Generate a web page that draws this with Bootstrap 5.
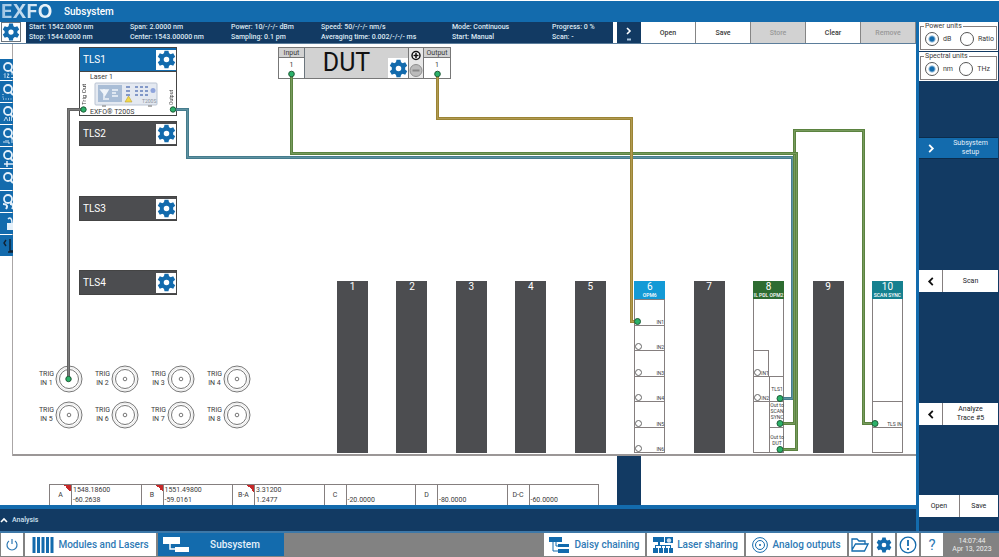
<!DOCTYPE html>
<html lang="en">
<head>
<meta charset="utf-8">
<meta name="viewport" content="width=device-width, initial-scale=1">
<title>Subsystem</title>
<link href="https://cdn.jsdelivr.net/npm/bootstrap@5.3.0/dist/css/bootstrap.min.css" rel="stylesheet">
<style>
:root{--blue:#136bad;--navy:#123a63;--slate:#4c4d50;--ink:#3a3a3a;--line:#857f7f}
body{font:500 7px/10px Roboto,"Liberation Sans",sans-serif;color:var(--ink);background:#fff;padding-top:1px}
button,a.tool{font:inherit;color:inherit;border:0;padding:0;background:#fff;text-decoration:none}
svg{display:block;flex:none}
.topbar{background:var(--blue);height:21px;padding-left:1px;color:#fff}
.logo{font:700 19px/21px Inter,sans-serif;width:63px;color:transparent;background:linear-gradient(90deg,#9cc4e4,#dcebf6 55%,#fff);-webkit-background-clip:text;background-clip:text}
.page-title{font-size:10px;line-height:22px;font-weight:500;margin:0}
.navy{background:var(--navy);color:#fff}
.inforow{height:22px;border-bottom:1px solid #5b7d9b}
.gearbtn{width:20px;height:20px;margin:0 5px 0 1px;color:var(--blue)}
.gearbtn svg{width:18px;height:18px}
.status{display:grid;grid-template-columns:101fr 101fr 90fr 131fr 100fr 61fr;padding-left:3px;margin-right:4px;color:#dce8f3;white-space:nowrap}
.expand{width:24px}
.cmd{width:55px;border-right:1px solid #858585}
.cmd:disabled{background:#d2d2d2;color:#999}
.stage{min-height:412px}
.rail{width:13px;padding-top:15px;box-shadow:inset -1px 0 #aaa6a6}
.rail button{width:13px;height:21px;margin-bottom:1px;background:var(--blue);color:#e4f0fa;overflow:hidden;display:block}
.canvas{border-bottom:2px solid #9b9797;position:relative}
.node{position:absolute}
.wires{position:absolute;left:0;top:0;width:100%;height:100%;overflow:hidden;pointer-events:none}
.tls{width:98px;left:66px;border:1px solid #444}
.tls header{height:23px;background:var(--slate);color:#fff;padding-left:3px;font-size:10px;font-weight:400}
.tls.on header{background:var(--blue)}
.tls header button,.dut .gearbox{width:20px;height:20px;color:var(--blue)}
.tls header svg,.dut .gearbox svg{width:19px;height:19px}
.laser{height:44px;font-weight:400;border-top:1px solid #444}
.laser .side{writing-mode:vertical-rl;transform:rotate(180deg);font-size:6px;line-height:7px;width:8px;padding-top:10px;white-space:nowrap}
.laser .side.outp{font-size:5px}
.laser .face{padding-left:2px;white-space:nowrap}
.laser svg{width:68px;height:25px}
.dut{left:265px;top:3px;width:173px;height:32px;border:1px solid #777;background:#d2d2d2}
.dut .port{width:26px;background:#fff;font-weight:400;text-align:center}
.dut .port b{display:block;font-weight:400;background:#d2d2d2;height:10px;border-bottom:1px solid #777}
.dut .port i{display:block;font-style:normal;line-height:14px}
.dut strong{font-weight:400;font-size:25px;line-height:30px;color:#111}
.dut .pm{width:16px;background:#e8e8e8;border-left:1px solid #777;border-right:1px solid #777}
.dut .pm button{background:transparent;height:15px}
.slots{left:324px;top:237px;width:566px;height:172px}
.slot{width:31px;background:var(--slate);color:#fff;text-align:center;font-size:10px;line-height:12px;font-weight:400}
.slot.live{background:#fff;color:var(--ink);border:1px solid var(--line);display:flex;flex-direction:column}
.slot header{height:18px;margin:-1px -1px 0;color:#fff;overflow:hidden;white-space:nowrap}
.slot header small{display:block;font-size:5px;line-height:5px;margin:0 -4px;font-weight:500}
.cells{display:grid;flex:1;grid-template-rows:repeat(6,minmax(0,1fr));font-size:5px;line-height:6px;font-weight:400}
.duo{grid-template-columns:15px 15px}
.cell{border-top:1px solid var(--line);display:flex;align-items:flex-end;justify-content:space-between}
.cell::before{content:"";width:7px;height:7px;border:1px solid #666;border-radius:50%;background:#fff;flex:none}
.cell.used::before{visibility:hidden}
.cell.out{border-left:1px solid var(--line);align-items:center;justify-content:center}
.cell.raised{align-items:flex-start}
.cell.out::before{content:none}
.cell.rside{border-right:1px solid var(--line)}
.trigs{left:25px;top:321px;display:grid;grid-template-columns:repeat(4,56px);row-gap:8px;line-height:9px;font-weight:400;text-align:center}
.trigs span{width:17px;white-space:nowrap;flex:none}
.trigs svg{width:28px;height:28px}
.bottom{height:49px}
.markers{width:550px;margin-left:49px;table-layout:fixed;font-weight:400;border-collapse:collapse}
.markers th,.markers td{border:1px solid var(--line);border-bottom:0;padding:0;height:21px}
.markers th{width:22px;text-align:center;font-weight:400}
.markers td{padding-left:1px;vertical-align:bottom}
.flagged{background:linear-gradient(45deg,transparent 50%,#c62828 50%) top right/7px 7px no-repeat}
.gapcol{width:24px}
.rightpad{width:275px}
.analysis{height:26px;border-top:4px solid var(--blue)}
.analysis button{background:none;color:#cfe0ef}
.sidebar{width:83px;border-left:3px solid var(--blue);padding-right:1px}
.units{background:#fff;color:var(--ink);padding:2px 1px 1px;margin-bottom:1px;font-weight:400}
.units fieldset{border:1px solid var(--line);height:24px;min-width:0;position:relative;margin-top:2px;padding:5px 2px 0 4px}
.units legend{position:absolute;top:-5px;left:3px;width:auto;font-size:7px;line-height:9px;background:#fff;margin:0;padding:0 1px}
.units label{line-height:15px}
.units input{appearance:none;width:14px;height:14px;border:1px solid #555;border-radius:50%;margin:0;background:#fff;flex:none}
.units input:checked{background:radial-gradient(circle,var(--blue) 2px,#fff 4px)}
.side-btn{height:22px;width:100%;line-height:9px;font-weight:400}
.side-btn .chev{width:24px;align-self:stretch;border-right:1px solid var(--line);color:#111}
.side-btn.active{background:var(--blue);color:#e4f0fa;border:1px solid #0b2c4d;border-width:1px 0}
.side-btn.active .chev{border-color:transparent;color:#fff}
.s1{margin-top:55px}.s2,.s3{margin-top:111px}
.s4{margin-bottom:14px;height:22px}
.s4 button{font-weight:400}
.s4 button+button{border-left:1px solid var(--line)}
.taskbar{background:#828282;height:26px;border-top:2px solid #3d78a8;padding-left:1px;gap:2px}
.taskbar .tool{font-size:10px;color:#2f7ab5;height:23px;display:flex;align-items:center;justify-content:center;white-space:nowrap}
.taskbar .wide{min-width:131px}
.taskbar .mid{min-width:101px}
.taskbar .slim{min-width:97px}
.taskbar .sq{width:22px}
.taskbar .help{font-size:15px;font-weight:400}
.taskbar .tool.current{background:var(--blue);color:#e4f0fa;width:126px}
.clock{width:54px;color:#eee;text-align:center;line-height:8px;font-weight:400}
</style>
</head>
<body class="d-flex flex-column min-vh-100">
<svg width="0" height="0" class="position-absolute" aria-hidden="true">
  <symbol id="gear" viewBox="-12 -12 24 24">
    <circle r="6" fill="none" stroke="currentColor" stroke-width="5"/>
    <g fill="currentColor"><path id="tooth" d="M-3.4-7 L-2.5-11.2H2.5L3.4-7Z"/><use href="#tooth" transform="rotate(60)"/><use href="#tooth" transform="rotate(120)"/><use href="#tooth" transform="rotate(180)"/><use href="#tooth" transform="rotate(240)"/><use href="#tooth" transform="rotate(300)"/></g>
  </symbol>
  <symbol id="left" viewBox="0 0 8 10"><path d="M6 1 2 5l4 4" fill="none" stroke="currentColor" stroke-width="2"/></symbol>
  <symbol id="right" viewBox="0 0 8 10"><path d="M2 1l4 4-4 4" fill="none" stroke="currentColor" stroke-width="2"/></symbol>
  <symbol id="lens" viewBox="0 0 13 21"><circle cx="8" cy="8" r="4" fill="none" stroke="currentColor" stroke-width="1.800"/><path d="M10.500 11 13 14" stroke="currentColor" stroke-width="2"/></symbol>
  <symbol id="jack" viewBox="-14 -14 28 28"><g fill="none" stroke="#777"><circle r="13"/><circle r="11.500" stroke="#ddd" stroke-width=".7"/><circle r="9.500"/><circle r="1.800"/></g></symbol>
</svg>

<header class="topbar d-flex">
  <span class="logo">EXFO</span>
  <h1 class="page-title">Subsystem</h1>
</header>

<div class="d-flex flex-grow-1">
  <main class="d-flex flex-column flex-grow-1">
    <div class="inforow d-flex">
      <button class="gearbtn border border-secondary d-flex align-items-center justify-content-center" aria-label="Settings"><svg><use href="#gear"/></svg></button>
      <div class="status navy flex-grow-1">
        <div>Start: 1542.0000 nm<br>Stop: 1544.0000 nm</div>
        <div>Span: 2.0000 nm<br>Center: 1543.00000 nm</div>
        <div>Power: 10/-/-/- dBm<br>Sampling: 0.1 pm</div>
        <div>Speed: 50/-/-/- nm/s<br>Averaging time: 0.002/-/-/- ms</div>
        <div>Mode: Continuous<br>Start: Manual</div>
        <div>Progress: 0 %<br>Scan: -</div>
      </div>
      <button class="expand navy d-flex align-items-center justify-content-center" aria-label="Expand"><svg width="8" height="16" viewBox="0 0 8 16"><path d="M2 3l3 3-3 3" fill="none" stroke="#fff" stroke-width="1.600"/><path d="M2 14.500h4" stroke="#a9c4dd" stroke-width="2"/></svg></button>
      <button class="cmd">Open</button><button class="cmd">Save</button><button class="cmd" disabled>Store</button><button class="cmd">Clear</button><button class="cmd" disabled>Remove</button>
    </div>

    <div class="stage d-flex flex-grow-1">
      <nav class="rail" aria-label="Zoom tools">
        <button aria-label="Zoom 1:1"><svg width="13" height="21"><use href="#lens"/><path d="M4 15.500l1-1V19M7 15h2l-2 3.500h2.500M11 15h2M11 18.500h2" fill="none" stroke="currentColor" stroke-width=".8"/></svg></button>
        <button aria-label="Zoom area"><svg width="13" height="21"><use href="#lens"/><path d="M3 13v5h10" fill="none" stroke="currentColor" stroke-dasharray="1 1.500"/></svg></button>
        <button aria-label="Zoom all"><svg width="13" height="21"><use href="#lens"/><path d="M4 18l2-4 2 4M9.500 14v4M11.500 14v4" fill="none" stroke="currentColor" stroke-width=".8"/></svg></button>
        <button aria-label="Zoom auto"><svg width="13" height="21"><use href="#lens"/><path d="M4 18v-2M6 18v-3M8 15v3h2M12 14v4" fill="none" stroke="currentColor" stroke-width=".9"/></svg></button>
        <button aria-label="Zoom vertical"><svg width="13" height="21"><use href="#lens"/><path d="M4 17h9M7 14v6" fill="none" stroke="currentColor" stroke-width="1.500"/></svg></button>
        <button aria-label="Zoom"><svg width="13" height="21"><use href="#lens"/></svg></button>
        <button aria-label="Undo zoom"><svg width="13" height="21"><use href="#lens"/><path d="M3 13c4 0 5 2 3 5M10 13c3 0 4 2 2 5" fill="none" stroke="currentColor" stroke-width="2"/></svg></button>
        <button aria-label="Lock"><svg width="13" height="21"><path d="M7 10h6v7H7z" fill="currentColor"/><path d="M8 6c2-2 4-1 4 4" fill="none" stroke="currentColor" stroke-width="1.500"/></svg></button>
        <button aria-label="Collapse"><svg width="13" height="21"><path d="M6 5 4 8l2 3M10 4v12h3M8 17h5" fill="none" stroke="#123" stroke-width="1.400"/></svg></button>
      </nav>

      <section class="canvas flex-grow-1" aria-label="Wiring diagram">
        <article class="node tls on" style="top:3px">
          <header class="d-flex align-items-center justify-content-between">TLS1<button class="d-flex align-items-center justify-content-center" aria-label="TLS1 settings"><svg><use href="#gear"/></svg></button></header>
          <div class="laser d-flex justify-content-between bg-white">
            <span class="side">Trig Out</span>
            <div class="face flex-grow-1">Laser 1
              <svg viewBox="0 0 68 25" aria-hidden="true"><rect x="5" y="1" width="62" height="22" rx="1" fill="#e4e9f1" stroke="#b9c3d2"/><rect x="8" y="3" width="24" height="17" fill="#a9bdd6"/><path d="M14 7v9M11 8h7l-3 5zM13 17h6M22 8h6M22 11h4M22 14h6" stroke="#f1f5fa" stroke-width="1.500" fill="#f1f5fa"/><g stroke="#8399c8" stroke-width="1.800"><path d="M36 5h4M36 9h4M36 13h4" /><path d="M45 5h14M45 9h14M45 13h14" stroke-dasharray="3 2"/></g><circle cx="63" cy="8.500" r="2.500" fill="#8ea4dc"/><path d="M35 20l3.500-6 3.500 6z" fill="#f3d949" stroke="#b8a23c" stroke-width=".6"/><path d="M12 24h4M58 24h4" stroke="#999" stroke-width="1.500"/><text x="52" y="20.500" font-size="5" fill="#8b919c">T200S</text></svg>
              EXFO® T200S</div>
            <span class="side outp">Output</span>
          </div>
        </article>
        <article class="node tls" style="top:77px"><header class="d-flex align-items-center justify-content-between">TLS2<button class="d-flex align-items-center justify-content-center" aria-label="TLS2 settings"><svg><use href="#gear"/></svg></button></header></article>
        <article class="node tls" style="top:152px"><header class="d-flex align-items-center justify-content-between">TLS3<button class="d-flex align-items-center justify-content-center" aria-label="TLS3 settings"><svg><use href="#gear"/></svg></button></header></article>
        <article class="node tls" style="top:226px"><header class="d-flex align-items-center justify-content-between">TLS4<button class="d-flex align-items-center justify-content-center" aria-label="TLS4 settings"><svg><use href="#gear"/></svg></button></header></article>

        <article class="node dut d-flex">
          <div class="port border-end border-secondary"><b>Input</b><i>1</i></div>
          <strong class="flex-grow-1 text-center">DUT</strong>
          <button class="gearbox d-flex align-items-center justify-content-center align-self-end" aria-label="DUT settings"><svg><use href="#gear"/></svg></button>
          <div class="pm d-flex flex-column align-items-center">
            <button aria-label="Add"><svg width="12" height="15" viewBox="0 0 12 15"><circle cx="6" cy="7.500" r="4" fill="#fff" stroke="#111" stroke-width="1.500"/><path d="M6 5v5M3.500 7.500h5" stroke="#111" stroke-width="1.500"/></svg></button>
            <button aria-label="Remove output"><svg width="14" height="15" viewBox="0 0 14 15"><circle cx="7" cy="7.500" r="6" fill="#bbb" stroke="#8f8f8f"/><path d="M3.500 7.500h7" stroke="#888" stroke-width="2"/></svg></button>
          </div>
          <div class="port"><b>Output</b><i>1</i></div>
        </article>

        <div class="node slots d-flex justify-content-between">
          <div class="slot">1</div><div class="slot">2</div><div class="slot">3</div><div class="slot">4</div><div class="slot">5</div>
          <div class="slot live"><header style="background:#139ad6">6<small>OPM6</small></header>
            <div class="cells"><div class="cell used">IN1</div><div class="cell">IN2</div><div class="cell">IN3</div><div class="cell">IN4</div><div class="cell">IN5</div><div class="cell">IN6</div></div></div>
          <div class="slot">7</div>
          <div class="slot live"><header style="background:#2e6c31">8<small>IL PDL OPM2</small></header>
            <div class="cells duo">
              <div class="cell rside" style="grid-area:3/1">IN1</div><div class="cell" style="grid-area:4/1">IN2</div>
              <div class="cell out" style="grid-area:5/1;border-left:0"></div>
              <div class="cell out" style="grid-area:4/2">TLS1</div>
              <div class="cell out raised" style="grid-area:5/2">Out to SCAN SYNC</div>
              <div class="cell out" style="grid-area:6/2">Out to DUT</div>
            </div></div>
          <div class="slot">9</div>
          <div class="slot live"><header style="background:#16808f">10<small>SCAN SYNC</small></header>
            <div class="cells"><div class="cell used" style="grid-row:5">TLS IN</div><div class="cell out" style="grid-row:6;border-left:0"></div></div></div>
        </div>

        <div class="node trigs">
          <div class="d-flex align-items-center"><span>TRIG<br>IN 1</span><svg><use href="#jack"/></svg></div>
          <div class="d-flex align-items-center"><span>TRIG<br>IN 2</span><svg><use href="#jack"/></svg></div>
          <div class="d-flex align-items-center"><span>TRIG<br>IN 3</span><svg><use href="#jack"/></svg></div>
          <div class="d-flex align-items-center"><span>TRIG<br>IN 4</span><svg><use href="#jack"/></svg></div>
          <div class="d-flex align-items-center"><span>TRIG<br>IN 5</span><svg><use href="#jack"/></svg></div>
          <div class="d-flex align-items-center"><span>TRIG<br>IN 6</span><svg><use href="#jack"/></svg></div>
          <div class="d-flex align-items-center"><span>TRIG<br>IN 7</span><svg><use href="#jack"/></svg></div>
          <div class="d-flex align-items-center"><span>TRIG<br>IN 8</span><svg><use href="#jack"/></svg></div>
        </div>

        <svg class="wires" aria-hidden="true">
          <g transform="translate(-13 -44)" fill="none">
            <g stroke-width="3">
              <path d="M84 109.500H68.500V379" stroke="#636363"/><path d="M84 109.500H68.500V379" stroke="#7d7d7d" stroke-width="1"/>
              <path d="M173 109.500H187.500V157.500H792.500V398.500H780" stroke="#457c8d"/><path d="M173 109.500H187.500V157.500H792.500V398.500H780" stroke="#5f93a2" stroke-width="1"/>
              <path d="M780 423.500H794.500V130.500H863.500V423.500H875" stroke="#5b8340"/><path d="M780 423.500H794.500V130.500H863.500V423.500H875" stroke="#779a5d" stroke-width="1"/>
              <path d="M291.500 74V153.500H796.500V449.500H780" stroke="#5b8340"/><path d="M291.500 74V153.500H796.500V449.500H780" stroke="#779a5d" stroke-width="1"/>
              <path d="M437.500 74V118.500H631.500V321.500H637" stroke="#9b8435"/><path d="M437.500 74V118.500H631.500V321.500H637" stroke="#b19a50" stroke-width="1"/>
            </g>
            <g fill="#2bb169" stroke="#1f5c38">
              <circle cx="83.500" cy="109.500" r="2.700"/><circle cx="173" cy="109.500" r="2.700"/><circle cx="68.500" cy="379" r="2.700"/>
              <circle cx="291.500" cy="74" r="2.800"/><circle cx="437.500" cy="74" r="2.800"/><circle cx="637.500" cy="321.500" r="3"/>
              <circle cx="780" cy="398.500" r="3"/><circle cx="780" cy="423.500" r="3"/><circle cx="780" cy="449.500" r="3"/><circle cx="875" cy="423.500" r="3"/>
            </g>
          </g>
        </svg>
      </section>
    </div>

    <div class="bottom d-flex align-items-stretch">
      <div class="flex-grow-1 d-flex align-items-end">
        <table class="markers">
          <tr><th scope="row" class="flagged">A</th><td>1548.18600<br>-60.2638</td><th scope="row" class="flagged">B</th><td>1551.49800<br>-59.0161</td><th scope="row" class="flagged">B-A</th><td>3.31200<br>1.2477</td><th scope="row">C</th><td>-20.0000</td><th scope="row">D</th><td>-80.0000</td><th scope="row">D-C</th><td>-60.0000</td></tr>
        </table>
      </div>
      <div class="navy gapcol"></div>
      <div class="rightpad"></div>
    </div>
    <div class="analysis navy d-flex"><button class="d-flex align-items-center gap-1 ps-0"><svg width="8" height="7" viewBox="0 0 8 7"><path d="M1 5l3-3 3 3" fill="none" stroke="#fff" stroke-width="1.600"/></svg>Analysis</button></div>
  </main>

  <aside class="sidebar navy d-flex flex-column">
    <div class="units"><fieldset><legend>Power units</legend><div class="d-flex justify-content-between">
      <label class="d-flex gap-1" for="db"><input type="radio" name="power" id="db" checked>dB</label><label class="d-flex gap-1" for="ratio"><input type="radio" name="power" id="ratio">Ratio</label></div></fieldset></div>
    <div class="units"><fieldset><legend>Spectral units</legend><div class="d-flex justify-content-between">
      <label class="d-flex gap-1" for="nm"><input type="radio" name="spectral" id="nm" checked>nm</label><label class="d-flex gap-1 pe-1" for="thz"><input type="radio" name="spectral" id="thz">THz</label></div></fieldset></div>
    <button class="side-btn active s1 d-flex align-items-center"><span class="chev d-flex align-items-center justify-content-center"><svg width="8" height="9"><use href="#right"/></svg></span><span class="flex-grow-1">Subsystem<br>setup</span></button>
    <button class="side-btn s2 d-flex align-items-center text-dark"><span class="chev d-flex align-items-center justify-content-center"><svg width="8" height="9"><use href="#left"/></svg></span><span class="flex-grow-1">Scan</span></button>
    <button class="side-btn s3 d-flex align-items-center text-dark"><span class="chev d-flex align-items-center justify-content-center"><svg width="8" height="9"><use href="#left"/></svg></span><span class="flex-grow-1">Analyze<br>Trace #5</span></button>
    <div class="s4 d-flex mt-auto text-dark"><button class="flex-fill">Open</button><button class="flex-fill">Save</button></div>
  </aside>
</div>

<footer class="taskbar d-flex">
  <button class="tool sq" aria-label="Power"><svg width="14" height="14" viewBox="0 0 14 14"><path d="M4 3a5 5 0 1 0 6 0M7 1v5" fill="none" stroke="currentColor" stroke-width="1.200"/></svg></button>
  <a class="tool wide gap-1" href="#modules"><svg width="22" height="16" viewBox="0 0 22 16"><path d="M2 0v16M6.500 0v16M11 0v16M15.500 0v16M20 0v16" stroke="#136bad" stroke-width="3"/></svg><span>Modules and Lasers</span></a>
  <a class="tool current px-1" href="#subsystem"><svg width="28" height="16" viewBox="0 0 28 16"><path d="M1 0h17v7H1zM13 10h14v5H13z" fill="#fff"/><path d="M8 6v6h6" fill="none" stroke="#fff" stroke-width="1.500"/></svg><span class="flex-grow-1 text-center">Subsystem</span></a>
  <span class="flex-grow-1"></span>
  <a class="tool mid gap-1" href="#daisy"><svg width="21" height="16" viewBox="0 0 21 16"><path d="M0 0h13v5H0zM9 7h11v3H9zM9 12h11v4H9z" fill="#136bad"/><path d="M4 5v9h6M7 5v4h3" fill="none" stroke="#136bad"/></svg>Daisy chaining</a>
  <a class="tool slim gap-1" href="#sharing"><svg width="20" height="16" viewBox="0 0 20 16"><path d="M0 0h11v5H0zM12 0h8v6h-8zM0 11h5v5H0zM6 11h4v5H6zM11 11h4v5h-4zM16 11h4v5h-4zM2 8h15v1H2zM5 5h2v3H5zM2 8h1v3H2zM8 8h1v3H8zM12 8h1v3h-1zM17 8h1v3h-1z" fill="#136bad"/><circle cx="16" cy="3.500" r="2.200" fill="#cfe0ef"/></svg>Laser sharing</a>
  <a class="tool mid gap-1" href="#analog"><svg width="16" height="16" viewBox="0 0 16 16"><g fill="none" stroke="#136bad"><circle cx="8" cy="8" r="7.400"/><circle cx="8" cy="8" r="4.500"/></g><circle cx="8" cy="8" r="1" fill="#136bad"/></svg>Analog outputs</a>
  <button class="tool sq" aria-label="Files"><svg width="18" height="14" viewBox="0 0 18 14"><path d="M1 12V1h5l2 2h6v3M1 12l3.500-6H17l-3.500 7H1z" fill="none" stroke="#136bad" stroke-width="1.300"/></svg></button>
  <button class="tool sq" aria-label="Settings"><svg width="16" height="16" color="#136bad"><use href="#gear"/></svg></button>
  <button class="tool sq" aria-label="Alerts"><svg width="18" height="18" viewBox="0 0 18 18"><circle cx="9" cy="9" r="7.800" fill="none" stroke="#136bad" stroke-width="1.300"/><path d="M9 4v6M9 12v2" stroke="#136bad" stroke-width="1.800"/></svg></button>
  <button class="tool sq help" aria-label="Help">?</button>
  <time class="clock d-flex flex-column justify-content-center"><span>14:07:44</span><span>Apr 13, 2023</span></time>
</footer>
<script src="https://cdn.jsdelivr.net/npm/bootstrap@5.3.0/dist/js/bootstrap.bundle.min.js"></script>
</body>
</html>
